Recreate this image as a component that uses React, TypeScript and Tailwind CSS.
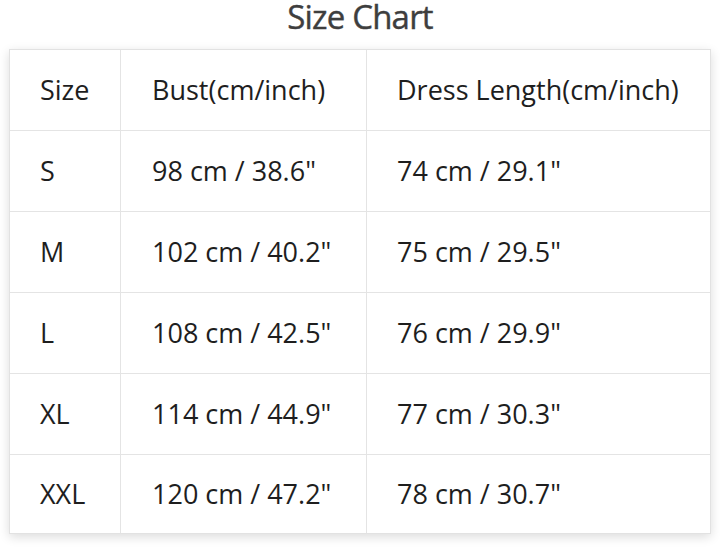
const rows = [
  ["Size", "Bust(cm/inch)", "Dress Length(cm/inch)"],
  ["S", '98 cm / 38.6"', '74 cm / 29.1"'],
  ["M", '102 cm / 40.2"', '75 cm / 29.5"'],
  ["L", '108 cm / 42.5"', '76 cm / 29.9"'],
  ["XL", '114 cm / 44.9"', '77 cm / 30.3"'],
  ["XXL", '120 cm / 47.2"', '78 cm / 30.7"'],
];

export default function App() {
  return (
    <div className="h-[548px] w-[720px] overflow-hidden bg-white font-['Open_Sans',sans-serif]">
      <h1 className="pt-[1px] text-center text-[33px] leading-[31px] tracking-[-0.8px] text-[#3e3e3e] [-webkit-text-stroke:0.4px_#3e3e3e]">
        Size Chart
      </h1>

      <div className="ml-[9px] mt-[17px] w-[702px] border border-[#e2e2e2] bg-white shadow-[0_3px_10px_rgba(0,0,0,0.14)]">
        {rows.map((row, i) => (
          <div
            key={row[0]}
            className={`grid grid-cols-[111px_246px_1fr] text-[27px] text-[#1e1e1e] ${
              i < rows.length - 1 ? "h-[81px] border-b border-[#e4e4e4]" : "h-[78px]"
            }`}
          >
            <div className="flex items-center border-r border-[#e4e4e4] pl-[30px]">
              {row[0]}
            </div>
            <div className="flex items-center border-r border-[#e4e4e4] pl-[31px]">
              {row[1]}
            </div>
            <div className="flex items-center pl-[30px]">{row[2]}</div>
          </div>
        ))}
      </div>
    </div>
  );
}
